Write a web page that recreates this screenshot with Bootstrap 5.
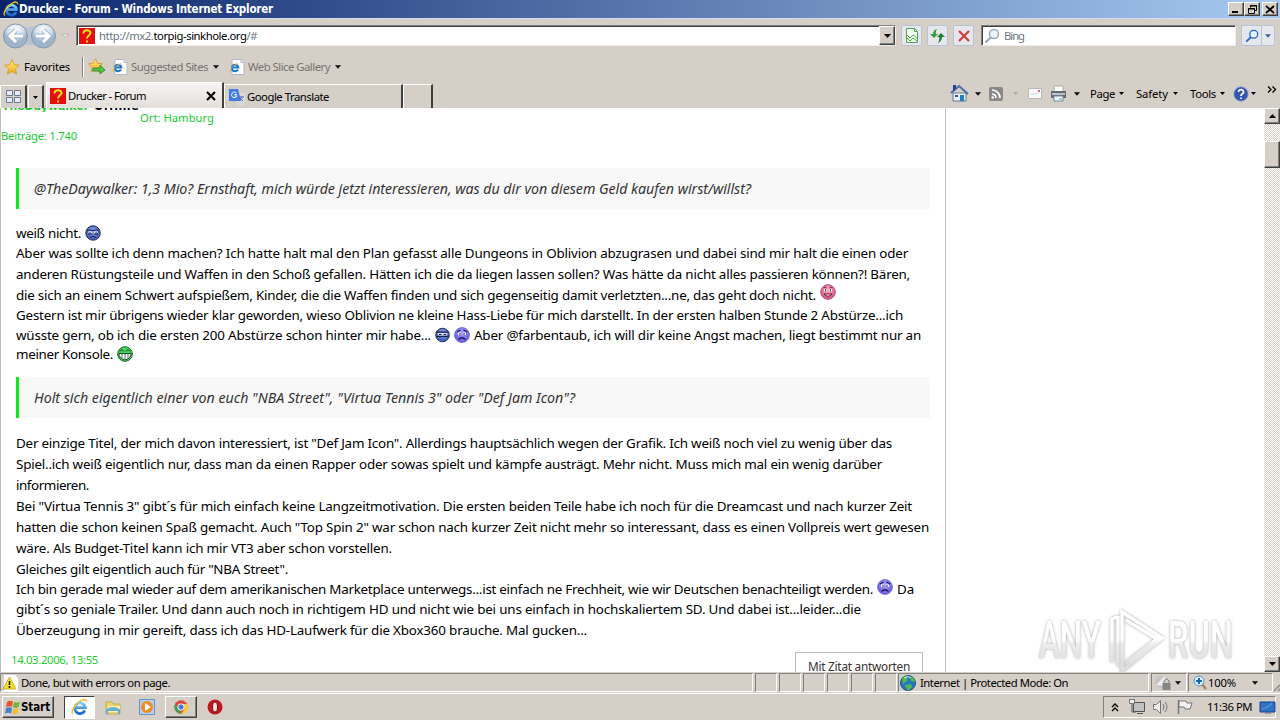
<!DOCTYPE html>
<html lang="de">
<head>
<meta charset="utf-8">
<title>Drucker - Forum</title>
<link href="https://cdn.jsdelivr.net/npm/bootstrap@5.3.0/dist/css/bootstrap.min.css" rel="stylesheet">
<style>
:root{--face:#d6cfc8}
body{width:1280px;height:720px;overflow:hidden;background:var(--face);font:11px/16px "Noto Sans","Liberation Sans",sans-serif;color:#000}
svg{display:block;flex:none;overflow:visible}
.fit{display:inline-block;white-space:pre;flex:none}
.ui{font-family:"Noto Sans",sans-serif;font-size:11.3px}
.bold-ui{font-family:"DejaVu Sans Condensed","DejaVu Sans",sans-serif;font-weight:700;font-size:11.5px}
.titlebar{height:18px;background:linear-gradient(90deg,#0a246a,#a6caf0);color:#fff;padding:0 2px 0 3px}
.raised{background:var(--face);border:1px solid;border-color:#fff #404040 #404040 #fff;box-shadow:inset -1px -1px #808080}
.winbtn{width:16px;height:14px;display:flex;align-items:center;justify-content:center}
.navrow{height:34px;border-top:1px solid #d4dced}
.address{width:820px;height:21px;background:#fff;border:1px solid;border-color:#808080 #eee #eee #808080;box-shadow:inset 1px 1px #404040}
.search{width:255px;height:21px;background:#fff;border:1px solid;border-color:#808080 #eee #eee #808080;box-shadow:inset 1px 1px #404040;margin-left:6px}
.softbtn{width:21px;height:21px;border:1px solid #b8c4d5;border-radius:2px;background:#e6e7ed;display:flex;align-items:center;justify-content:center}
.softbtn.narrow-drop{width:14px;margin-left:-1px}
.favrow{height:29px;color:#77736f}
.tabrow{height:27px;background:linear-gradient(#d6cfc8 45%,#d2d0c8)}
.tabitem{border-top:1px solid #fff;border-left:1px solid #fff;border-right:2px solid #404040}
.tab-quick{width:27px;height:23px}.tab-drop{width:16px;height:23px}
.tab-on{width:178px;height:26px;background:linear-gradient(#f6f4f2,#e3dfdb)}
.tab-off{width:179px;height:24px}.tab-new{width:30px;height:24px}
.viewport-area{height:564px;background:#fff}
.post{width:946px;border:1px solid #c0c0c0;border-width:0 1px;overflow:hidden}
.green{color:#22c832}
.quote{margin:0 15px;height:41px;border-left:3px solid #0fe81a;background:#f8f8f8;font-size:14.2px;font-style:italic;color:#333;padding-left:15px;line-height:42px}
.message{margin:0 15px;font-size:13.4px}
.textline{display:flex;align-items:flex-start;line-height:20px;height:21px;white-space:nowrap}
.textline svg{margin-top:2px}
.h20{height:20px}.h19{height:19px}
.gap4{gap:4px}
.textline .raise{margin-top:-1px}.textline .nudge{margin-top:0}
.replybtn{width:128px;height:30px;border:1px solid #bbb;color:#333;line-height:26px;padding-left:12px;font-size:11.8px}
.scrollbar-v{width:16px;background-color:#fff;background-image:repeating-conic-gradient(#d6cfc8 0 25%,#fff 0 50%);background-size:2px 2px}
.scrollbtn{width:16px;height:16px;display:flex;align-items:center;justify-content:center}
.thumb{height:27px;margin-top:17px}
.statusrow{height:20px;margin-top:1px}
.cell{height:19px;border:1px solid;border-color:#808080 #fff #fff #808080;flex:none;display:flex;align-items:center}
.c-main{width:753px}.c-small{width:22px}.c-zone{width:251px}.c-lock{width:36px}.c-zoom{width:85px}
.taskrow{height:27px;border-top:1px solid #fff}
.startbtn{width:52px;height:22px}
.pressed{width:31px;height:23px;background:#fff;border:1px solid;border-color:#404040 #fff #fff #404040}
.running{width:32px;height:22px}
.tray{width:173px;height:22px;border:1px solid;border-color:#808080 #fff #fff #808080}
.sep{width:2px;height:20px;border-left:1px solid #808080;border-right:1px solid #fff}
.ml1{margin-left:1px}.ml2{margin-left:2px}.ml3{margin-left:3px}.ml4{margin-left:4px}.ml5{margin-left:5px}.ml6{margin-left:6px}.ml7{margin-left:7px}.ml8{margin-left:8px}.ml10{margin-left:10px}.ml11{margin-left:11px}.ml12{margin-left:12px}.ml16{margin-left:16px}.ml18{margin-left:18px}
.watermark{right:38px;bottom:-2px;width:206px;height:68px;filter:drop-shadow(0 0 1.5px #aaa)}
#author{height:4px;align-items:flex-end}#author .bold-ui{font-size:12px;line-height:12px}
#place{height:20px;line-height:12px;padding-left:139px}#count{height:36px;line-height:8px}
#part1{padding-top:14px;height:168px}#part2{padding-top:15px;height:227px}
#postfoot{padding:6px 22px 0 10px;margin-top:1px}
</style>
</head>
<body class="d-flex flex-column">

<svg width="0" height="0" class="position-absolute" aria-hidden="true">
<defs>
<linearGradient id="eg" x2="0" y2="1"><stop stop-color="#7bd0fa"/><stop offset="1" stop-color="#1769c6"/></linearGradient>
<linearGradient id="star" x2="0" y2="1"><stop stop-color="#fff17e"/><stop offset="1" stop-color="#f2a51c"/></linearGradient>
<linearGradient id="wm" gradientUnits="userSpaceOnUse" x1="0" y1="10" x2="0" y2="60"><stop offset=".48" stop-color="#fff"/><stop offset=".56" stop-color="#ececec"/><stop offset="1" stop-color="#dedede"/></linearGradient>
<radialGradient id="orb" cy=".25"><stop stop-color="#fff"/><stop offset=".65" stop-color="#d3dfeb"/><stop offset="1" stop-color="#9fb3c9"/></radialGradient>
<radialGradient id="blueface" cy=".35"><stop stop-color="#8fa5e8"/><stop offset="1" stop-color="#4a66b8"/></radialGradient>
<radialGradient id="pinkface" cy=".35"><stop stop-color="#ffb1bc"/><stop offset="1" stop-color="#d8608c"/></radialGradient>
<radialGradient id="violetface" cy=".35"><stop stop-color="#aaa5ff"/><stop offset="1" stop-color="#7166e0"/></radialGradient>
<symbol id="ie" viewBox="0 0 16 16"><path d="M13 11.2A5 5 0 1 1 13.4 8.6H4" fill="none" stroke="url(#eg)" stroke-width="2.7"/><path d="M2 14.5C-1 13 4 5 9 2.3c4-2.2 6-1.5 5.4 1.1" fill="none" stroke="#f2bd2d" stroke-width="1.3"/></symbol>
<symbol id="iepage" viewBox="0 0 16 16"><path d="M3 .5h9l3 3v12H3z" fill="#fff" stroke="#b4b9c4"/><path d="M12 .5v3h3" fill="#e8edf5" stroke="#b4b9c4"/><path d="M9 10.6A3.3 3.3 0 1 1 9.4 8.6H3.4" fill="none" stroke="#1c78c8" stroke-width="2"/><path d="M1.5 13C0 11 4 6 9 4.7" fill="none" stroke="#e6b537"/></symbol>
<symbol id="favq" viewBox="0 0 16 16"><path fill="#e60d0d" d="M0 0h16v16H0z"/><path d="M4.5 5.500C4.500 1 12 1.300 11.500 5.200 11.300 7.300 8 7.300 8 10.500M8 12.500v2" fill="none" stroke="#e9e51a" stroke-width="2"/></symbol>
<symbol id="down" viewBox="0 0 7 4"><path d="M0 0h7L3.500 4z"/></symbol>
<symbol id="staricon" viewBox="0 0 16 16"><path d="M8 .7l2.200 4.900 5.200.6-3.900 3.600 1.100 5.300L8 12.500l-4.600 2.600 1.100-5.300L.6 6.200l5.200-.6z" fill="url(#star)" stroke="#d9a038"/></symbol>
<symbol id="cool" viewBox="0 0 16 16"><circle cx="8" cy="8" r="7.200" fill="url(#blueface)" stroke="#17264f"/><path d="M2 6q2-2 5-.5h2q3-1.500 5 .5" fill="none" stroke="#18234b"/><path d="M3 6.500h4v2H4zM9 6.500h4l-1 2H9z" fill="#eef2ff"/><path d="M5 7v1.500M11 7v1.500M3 9h4M9 9h4" stroke="#18234b"/><path d="M5 12.500q3-2.500 6 0" stroke="#18234b" fill="none"/></symbol>
<symbol id="masked" viewBox="0 0 16 16"><circle cx="8" cy="8" r="7.200" fill="url(#blueface)" stroke="#17264f"/><path d="M1 5h14M1 9.500h14" stroke="#15204a" stroke-width="1.400"/><path d="M3 6h10v2.500H3z" fill="#e3eaff"/><path d="M4 7.500h3M9 7.500h3" stroke="#111"/></symbol>
<symbol id="sad" viewBox="0 0 16 16"><circle cx="8" cy="8" r="7.500" fill="url(#violetface)" stroke="#6258c0" stroke-width=".7"/><path d="M3 5l3.500-2M13 5L9.500 3M4.500 12.500q3.500-3.500 7 0" fill="none" stroke="#21145e" stroke-width="1.200"/><path d="M4 5.500h3v2.500H4M9 5.500h3V8H9z" fill="#fff"/><path d="M6 6v2M10 6v2" stroke="#20145a"/></symbol>
<symbol id="smile" viewBox="0 0 16 16"><circle cx="8" cy="8" r="7.400" fill="url(#pinkface)" stroke="#a34370" stroke-width=".7"/><path d="M3.500 4q1.500-2 3 0M9.500 4q1.500-2 3 0" stroke="#7b2450" fill="none"/><path d="M4 5h3v2.500H4zM9 5h3v2.500H9z" fill="#fff"/><path d="M5.700 5v2.500M10.300 5v2.500" stroke="#581c39"/><path d="M4 10q4 4.500 8 0z" fill="#fff" stroke="#6b153e"/></symbol>
<symbol id="grin" viewBox="0 0 16 16"><circle cx="8" cy="8" r="7.300" fill="#48d45c" stroke="#1b5f31"/><path d="M3 5.500l2-2 2 2M9 5.500l2-2 2 2" stroke="#093d19" fill="none"/><path d="M2 7.500h12q0 5-6 6.500-6-1.500-6-6.500z" fill="#fff" stroke="#19552b"/><path d="M5 8v5M8 8v6M11 8v5" stroke="#53725c"/></symbol>
<symbol id="mag" viewBox="0 0 16 16"><path d="M7 9l-5.500 5.500" stroke="currentColor" stroke-width="2.200"/><circle cx="10" cy="6" r="4.500" fill="#eaf4ff" stroke="currentColor" stroke-width="1.500"/></symbol>
</defs>
</svg>

<header>
<div class="titlebar d-flex align-items-center">
<svg width="16" height="16"><use href="#ie"/></svg><span class="fit bold-ui" data-w="254">Drucker - Forum - Windows Internet Explorer</span>
<div class="d-flex ms-auto">
<div class="raised winbtn"><svg width="8" height="8"><path d="M0 6h6v2H0z"/></svg></div>
<div class="raised winbtn"><svg width="9" height="9"><path d="M2.500 2.500v-2h6v5h-2M2 1h7M.5 3.500h6v5h-6zM0 4h7" fill="none" stroke="#000"/></svg></div>
<div class="raised winbtn ml2"><svg width="8" height="7"><path d="M0 0l8 7M8 0L0 7" stroke="#000" stroke-width="1.700"/></svg></div>
</div></div>

<div class="navrow d-flex align-items-center">
<svg class="ml2" width="68" height="28" viewBox="0 0 68 28"><path d="M13 2Q27 8 41 2l13 12-13 12Q27 20 13 26z" fill="#b9c4d0"/><g fill="url(#orb)" stroke="#8799ae"><circle cx="13.500" cy="14" r="12"/><circle cx="41.500" cy="14" r="12"/></g><g fill="none" stroke="#9fb5ce" stroke-width="5"><path d="M21 14H8M14 8l-6 6 6 6"/><path d="M34 14h13M41 8l6 6-6 6"/></g><g fill="none" stroke="#fff" stroke-width="3"><path d="M21 14H8M14 8l-6 6 6 6"/><path d="M34 14h13M41 8l6 6-6 6"/></g><path d="M60 12h7l-3.500 4z" fill="#e5e3e1" stroke="#aaa" stroke-width=".7"/></svg>
<div class="address d-flex align-items-center ml6"><svg class="ml2" width="16" height="16"><use href="#favq"/></svg><span class="ui ml4 text-secondary fit" data-w="158">http://mx2.<span class="text-black">torpig-sinkhole.org</span>/#</span><div class="raised scrollbtn ms-auto h-100"><svg width="7" height="4"><use href="#down"/></svg></div></div>
<div class="softbtn ml5"><svg width="14" height="15"><path d="M1.500.5h8l3 3v11h-11zM9.500.5v3h3" fill="#f4fff2" stroke="#51a557"/><path d="M2 7l3 3 3-3 4 3M2 10l3 3 3-3 4 3" fill="none" stroke="#44a34d"/></svg></div>
<div class="softbtn ml5"><svg width="15" height="14"><path d="M0 5h3Q3 1 7 0 5 3 6 5h2L4 9z" fill="#399940"/><path d="M15 8h-3q0 4-4 6 2-4 1-6H7l4-4z" fill="#247e2c"/></svg></div>
<div class="softbtn ml5"><svg width="12" height="12"><path d="M1 1l10 10M11 1L1 11" stroke="#c94343" stroke-width="2.300"/></svg></div>
<div class="search ml7 d-flex align-items-center"><svg class="ml2" width="16" height="16" color="#9ba8b7"><use href="#mag"/></svg><span class="ui ml4 text-secondary fit" data-w="20">Bing</span></div>
<div class="softbtn ml5"><svg width="14" height="14" color="#2563cc"><use href="#mag"/></svg></div><div class="softbtn narrow-drop"><svg width="6" height="4" fill="#3464a5"><use href="#down"/></svg></div>
</div>

<div class="favrow ui d-flex align-items-center">
<svg class="ml4" width="16" height="16"><use href="#staricon"/></svg><span class="fit ml4 text-black" data-w="46">Favorites</span><div class="sep ml12"></div>
<svg class="ml4" width="18" height="17"><use href="#staricon" width="15" height="15"/><path d="M5 10h7V7l5 5-5 4v-3H5z" fill="#55c442" stroke="#298628" stroke-width=".8"/></svg>
<svg class="ml6" width="16" height="16"><use href="#iepage"/></svg><span class="fit ml3" data-w="77">Suggested Sites</span><svg class="ml5" width="6" height="4" fill="#000"><use href="#down"/></svg>
<svg class="ml10" width="16" height="16"><use href="#iepage"/></svg><span class="fit ml3" data-w="82">Web Slice Gallery</span><svg class="ml5" width="6" height="4" fill="#000"><use href="#down"/></svg>
</div>

<div class="tabrow ui d-flex align-items-end">
<div class="tabitem tab-quick d-flex align-items-center"><svg class="ml5" width="16" height="14"><path d="M.5.500h6v5h-6zM8.500.500h6v5h-6zM.5 7.500h6v5h-6zM8.500 7.500h6v5h-6z" fill="#e8edf3" stroke="#697991"/></svg></div>
<div class="tabitem tab-drop d-flex align-items-center justify-content-center ml1"><svg width="5" height="3"><use href="#down"/></svg></div>
<div class="tabitem tab-on d-flex align-items-center ml2"><svg class="ml3" width="16" height="16"><use href="#favq"/></svg><span class="fit ml2" data-w="78">Drucker - Forum</span><svg class="ms-auto" style="margin-right:7px" width="8" height="8"><path d="M0 0l8 8M8 0L0 8" stroke="#000" stroke-width="2"/></svg></div>
<div class="tabitem tab-off d-flex align-items-center"><svg class="ml4" width="16" height="16"><path d="M6 4h10v12H9z" fill="#d7d9dc"/><path d="M0 0h9l3 12H0z" fill="#3e7be5"/><path d="M8 5.500H5.500M7.500 4A2.800 2.800 0 1 0 8 7H5.500" stroke="#fff" fill="none"/><path d="M10 8h5M13 7v1l-3 4M11 9l3 3" stroke="#5175b2" fill="none"/></svg><span class="fit ml2" data-w="82">Google Translate</span></div>
<div class="tabitem tab-new"></div>
<div class="d-flex align-items-center ms-auto align-self-stretch" style="padding-bottom:2px">
<svg width="17" height="17"><path d="M2 8h13v8H2z" fill="#edf3fa" stroke="#61799c"/><path d="M0 8l8-7 9 8" fill="none" stroke="#4d6caa" stroke-width="2"/><path d="M2 0h3v4L2 6z" fill="#263f91"/><path d="M9 10h4v6H9z" fill="#227dba"/><path d="M4 10h3v2H4z" fill="#334e88"/></svg><svg class="ml7" width="6" height="4"><use href="#down"/></svg>
<svg class="ml8" width="14" height="14"><rect width="14" height="14" rx="2" fill="#898989"/><path d="M3 7a4 4 0 0 1 4 4M3 3a8 8 0 0 1 8 8" fill="none" stroke="#fff" stroke-width="1.700"/><circle cx="3.700" cy="10.500" r="1.300" fill="#fff"/></svg><svg class="ml10" width="5" height="3" fill="#aaa"><use href="#down"/></svg>
<svg class="ml10" width="14" height="11"><path d="M.5.500h13v10H.5z" fill="#fafafa" stroke="#b8b8b8"/><path d="M10 2h2v2h-2z" fill="#d36771"/><path d="M3 6h6" stroke="#ccc"/></svg>
<svg class="ml8" width="17" height="16"><path d="M4 0h9v6H4z" fill="#fff" stroke="#aaa"/><path d="M1 5h15v7H1z" fill="#646a72"/><path d="M2 8h13" stroke="#bac1cb" stroke-width="2"/><path d="M4 10h9v5H4z" fill="#eef7fb" stroke="#7b8795"/><path d="M9 13h3" stroke="#55a8c4"/></svg><svg class="ml7" width="6" height="4"><use href="#down"/></svg>
<span class="fit ml10" data-w="25">Page</span><svg class="ml4" width="5" height="3"><use href="#down"/></svg>
<span class="fit ml12" data-w="32">Safety</span><svg class="ml5" width="5" height="3"><use href="#down"/></svg>
<span class="fit ml12" data-w="26">Tools</span><svg class="ml4" width="5" height="3"><use href="#down"/></svg>
<svg class="ml8" width="16" height="16"><circle cx="8" cy="8" r="7.300" fill="#3456b1" stroke="#9ab1dc"/><path d="M5.500 6c0-3.500 5.500-3 5 .2C10.300 8 8 7.500 8 10M8 11.500V13" fill="none" stroke="#fff" stroke-width="1.700"/></svg><svg class="ml2" width="5" height="3"><use href="#down"/></svg>
<svg class="ml12 me-1 mb-2" width="8" height="7"><path d="M0 .5l3 3-3 3M4.500.5l3 3-3 3" fill="none" stroke="#000" stroke-width="1.300"/></svg>
</div></div>
</header>

<main class="viewport-area d-flex position-relative overflow-hidden">
<article class="post">
<div class="d-flex overflow-hidden" id="author"><span class="bold-ui green fit ml1" data-w="87">TheDaywalker</span><span class="bold-ui fit ml5" data-w="44">Offline</span></div>
<div class="green ui" id="place"><span class="fit" data-w="74">Ort: Hamburg</span></div>
<div class="green ui" id="count"><span class="fit" data-w="76">Beiträge: 1.740</span></div>
<div class="quote"><span class="fit" data-w="717">@TheDaywalker: 1,3 Mio? Ernsthaft, mich würde jetzt interessieren, was du dir von diesem Geld kaufen wirst/willst?</span></div>
<div class="message" id="part1">
<div class="textline h20 gap4"><span class="fit" data-w="65">weiß nicht.</span><svg width="16" height="16"><use href="#cool"/></svg></div>
<div class="textline"><span class="fit" data-w="892">Aber was sollte ich denn machen? Ich hatte halt mal den Plan gefasst alle Dungeons in Oblivion abzugrasen und dabei sind mir halt die einen oder</span></div>
<div class="textline"><span class="fit" data-w="894">anderen Rüstungsteile und Waffen in den Schoß gefallen. Hätten ich die da liegen lassen sollen? Was hätte da nicht alles passieren können?! Bären,</span></div>
<div class="textline h20 gap4"><span class="fit" data-w="800">die sich an einem Schwert aufspießem, Kinder, die die Waffen finden und sich gegenseitig damit verletzten...ne, das geht doch nicht.</span><svg class="raise" width="16" height="16"><use href="#smile"/></svg></div>
<div class="textline h20"><span class="fit" data-w="887">Gestern ist mir übrigens wieder klar geworden, wieso Oblivion ne kleine Hass-Liebe für mich darstellt. In der ersten halben Stunde 2 Abstürze...ich</span></div>
<div class="textline h19 gap4"><span class="fit" data-w="415">wüsste gern, ob ich die ersten 200 Abstürze schon hinter mir habe...</span><svg width="15" height="16"><use href="#masked"/></svg><svg width="16" height="16"><use href="#sad"/></svg><span class="fit" data-w="447">Aber @farbentaub, ich will dir keine Angst machen, liegt bestimmt nur an</span></div>
<div class="textline h19 gap4"><span class="fit" data-w="97">meiner Konsole.</span><svg width="16" height="16"><use href="#grin"/></svg></div>
</div>
<div class="quote"><span class="fit" data-w="541">Holt sich eigentlich einer von euch "NBA Street", "Virtua Tennis 3" oder "Def Jam Icon"?</span></div>
<div class="message" id="part2">
<div class="textline"><span class="fit" data-w="876">Der einzige Titel, der mich davon interessiert, ist "Def Jam Icon". Allerdings hauptsächlich wegen der Grafik. Ich weiß noch viel zu wenig über das</span></div>
<div class="textline"><span class="fit" data-w="866">Spiel..ich weiß eigentlich nur, dass man da einen Rapper oder sowas spielt und kämpfe austrägt. Mehr nicht. Muss mich mal ein wenig darüber</span></div>
<div class="textline"><span class="fit" data-w="73">informieren.</span></div>
<div class="textline"><span class="fit" data-w="896">Bei "Virtua Tennis 3" gibt´s für mich einfach keine Langzeitmotivation. Die ersten beiden Teile habe ich noch für die Dreamcast und nach kurzer Zeit</span></div>
<div class="textline"><span class="fit" data-w="913">hatten die schon keinen Spaß gemacht. Auch "Top Spin 2" war schon nach kurzer Zeit nicht mehr so interessant, dass es einen Vollpreis wert gewesen</span></div>
<div class="textline"><span class="fit" data-w="376">wäre. Als Budget-Titel kann ich mir VT3 aber schon vorstellen.</span></div>
<div class="textline h20"><span class="fit" data-w="272">Gleiches gilt eigentlich auch für "NBA Street".</span></div>
<div class="textline h20 gap4"><span class="fit" data-w="857">Ich bin gerade mal wieder auf dem amerikanischen Marketplace unterwegs...ist einfach ne Frechheit, wie wir Deutschen benachteiligt werden.</span><svg class="nudge" width="16" height="16"><use href="#sad"/></svg><span class="fit" data-w="17">Da</span></div>
<div class="textline"><span class="fit" data-w="845">gibt´s so geniale Trailer. Und dann auch noch in richtigem HD und nicht wie bei uns einfach in hochskaliertem SD. Und dabei ist...leider...die</span></div>
<div class="textline"><span class="fit" data-w="571">Überzeugung in mir gereift, dass ich das HD-Laufwerk für die Xbox360 brauche. Mal gucken...</span></div>
</div>
<div class="d-flex justify-content-between" id="postfoot"><span class="green ui fit" data-w="87">14.03.2006, 13:55</span><div class="replybtn"><span class="fit" data-w="102">Mit Zitat antworten</span></div></div>
</article>
<aside class="scrollbar-v ms-auto d-flex flex-column"><div class="raised scrollbtn"><svg width="7" height="4"><path d="M0 4h7L3.500 0z"/></svg></div><div class="raised thumb"></div><div class="raised scrollbtn mt-auto"><svg width="7" height="4"><use href="#down"/></svg></div></aside>
<svg class="watermark position-absolute" viewBox="0 0 206 68"><g fill="url(#wm)" font-family="Roboto,sans-serif" font-size="51" font-weight="500"><text x="3" y="52" textLength="62" lengthAdjust="spacingAndGlyphs">ANY</text><text x="132" y="52" textLength="65" lengthAdjust="spacingAndGlyphs">RUN</text></g><path d="M76 56V13l5-2M86 6l40 26-40 33zM82 10v50M90 14l31 19-31 24" fill="none" stroke="url(#wm)" stroke-width="3.500"/></svg>
</main>

<footer class="ui">
<div class="statusrow d-flex">
<div class="cell c-main"><svg class="ml1" width="16" height="16"><path d="M2 0h11l3 3v13H2z" fill="#fff"/><path d="M7.500 2l6.500 12H1z" fill="#f6df27" stroke="#c9b02d"/><path d="M7.500 6v4M7.500 11v2" stroke="#111" stroke-width="1.500"/></svg><span class="fit ml3" data-w="149">Done, but with errors on page.</span></div>
<div class="cell c-small ml2"></div><div class="cell c-small ml2"></div><div class="cell c-small ml2"></div><div class="cell c-small ml2"></div><div class="cell c-small ml2"></div><div class="cell c-small ml2"></div>
<div class="cell c-zone ml1"><svg class="ml1" width="16" height="16"><circle cx="8" cy="8" r="7.500" fill="#2576c3" stroke="#225084"/><path d="M2 4q4-4 6-3l-1 5-4 3zM10 1q5 2 5 6l-4-1zM5 10l6-1 1 3-4 4z" fill="#55b948"/><path d="M4 3q4-3 7 0" stroke="#c4efff" fill="none"/></svg><span class="fit ml4" data-w="148">Internet | Protected Mode: On</span></div>
<div class="cell c-lock ml2"><svg class="ml3" width="17" height="16"><circle cx="6" cy="7" r="6" fill="#c3c5c8"/><path d="M1 10l9-9v10" fill="#eee"/><path d="M9 8V6q2.500-4 5 0v2" fill="none" stroke="#777"/><path d="M7.500 8h8v7h-8z" fill="#858585"/></svg><svg class="ml3" width="6" height="4"><use href="#down"/></svg></div>
<div class="cell c-zoom ml1"><svg class="ml4" width="14" height="15"><path d="M8 8l5 6" stroke="#ad8252" stroke-width="2.500"/><circle cx="6" cy="6" r="5" fill="#d7efff" stroke="#5d94c9"/><path d="M3 6h6M6 3v6" stroke="#1769b5" stroke-width="2"/></svg><span class="fit ml1" data-w="28">100%</span><svg class="ml16" width="6" height="4"><use href="#down"/></svg></div>
<svg class="ms-auto mt-1" width="13" height="14"><path d="M1 14L13 2M5 14l8-8M9 14l4-4" stroke="#888" stroke-width="1.500"/></svg>
</div>
<div class="taskrow d-flex align-items-center">
<div class="raised startbtn d-flex align-items-center ml2"><svg class="ml2" width="16" height="15"><path d="M2 2q3-2 6-.5L7 7Q4 5.500 1 7z" fill="#e7562d"/><path d="M9 2q3 1 6-.5L13.500 7Q11 8.500 8 7.500z" fill="#6fb53f"/><path d="M1 8q3-1.500 6 0l-1 5.500Q3 12 0 13.500z" fill="#4380cf"/><path d="M8 8.500q3 1 5.500-.5l-1 5.500q-3 1.500-5.500 0z" fill="#f1bf2d"/></svg><span class="bold-ui fit" data-w="29">Start</span></div>
<div class="pressed d-flex align-items-center justify-content-center ml10"><svg width="17" height="18"><use href="#ie"/></svg></div>
<svg class="ml10" width="16" height="16"><path d="M1 3h6l1 2h7v10H1z" fill="#ecd372" stroke="#c7ac50"/><path d="M3 7h12v6H3z" fill="#fff0a9"/><path d="M2 15q-1-6 6-6t6 6M2 15v-4h12v4" fill="none" stroke="#66add4" stroke-width="2"/></svg>
<svg class="ml18" width="16" height="16"><path d="M.5.500h15v15H.5z" fill="#b2d0ee" stroke="#6794c7"/><circle cx="8" cy="8" r="6" fill="#f38c20"/><path d="M6 4l6 4-6 4z" fill="#fff"/></svg>
<div class="raised running d-flex align-items-center justify-content-center ml10"><svg width="14" height="14"><circle cx="7" cy="7" r="6.700" fill="#e5453a"/><path d="M1.200 3.600L5 10l2.500 3.800A7 7 0 0 1 1.200 3.600z" fill="#3ba558"/><path d="M7 4h6.500A7 7 0 0 1 7 14l3.500-5z" fill="#f6cc3c"/><circle cx="7" cy="7" r="3.200" fill="#4779d9" stroke="#fff"/></svg></div>
<svg class="ml10" width="16" height="16"><circle cx="8" cy="8" r="7.500" fill="#bb1820"/><ellipse cx="8" cy="8" rx="2.500" ry="5" fill="#f3dedc" stroke="#7b0a10"/></svg>
<div class="tray d-flex align-items-center ms-auto me-1">
<svg class="ml8" width="6" height="9"><path d="M0 4l3-3 3 3M0 8l3-3 3 3" fill="none" stroke="#000" stroke-width="1.400"/></svg>
<svg class="ml11" width="16" height="16"><path d="M4.500 3.500h11v9h-11z" fill="#bfc1c2" stroke="#555"/><path d="M8 14.500h6M1 0v4h4V0M3 4v9h4" fill="none" stroke="#555"/><path d="M.5.500h5v4h-5z" fill="#eee" stroke="#777"/></svg>
<svg class="ml8" width="16" height="16"><path d="M.5 5.500h3l4-4v13l-4-4h-3z" fill="#eee" stroke="#777"/><path d="M10 5q2 3 0 6M12 3q4 5 0 10" stroke="#777" fill="none"/></svg>
<svg class="ml8" width="16" height="16"><path d="M1.500 1v14" stroke="#777" stroke-width="1.500"/><path d="M2 2h7l1 2h5l-2 6H8L7 8H2z" fill="#f1f1f1" stroke="#777"/></svg>
<span class="fit ms-auto" data-w="45">11:36 PM</span><svg class="ml8" width="15" height="13"><path d="M0 1h15v10H0z" fill="#2f73c6" stroke="#183f86"/><path d="M2 8q6-1 10-6" stroke="#4f93d8" stroke-width="1.500" fill="none"/><path d="M5 12h6" stroke="#667"/></svg>
</div></div>
</footer>
<script src="https://cdn.jsdelivr.net/npm/bootstrap@5.3.0/dist/js/bootstrap.bundle.min.js"></script>
<script>
// Spread each label to its pixel measure while retaining selectable text.
document.querySelectorAll('.fit[data-w]').forEach(el=>{const w=+el.dataset.w;el.style.letterSpacing=((w-el.getBoundingClientRect().width)/(el.textContent.length))+'px';});
</script>
</body>
</html>
